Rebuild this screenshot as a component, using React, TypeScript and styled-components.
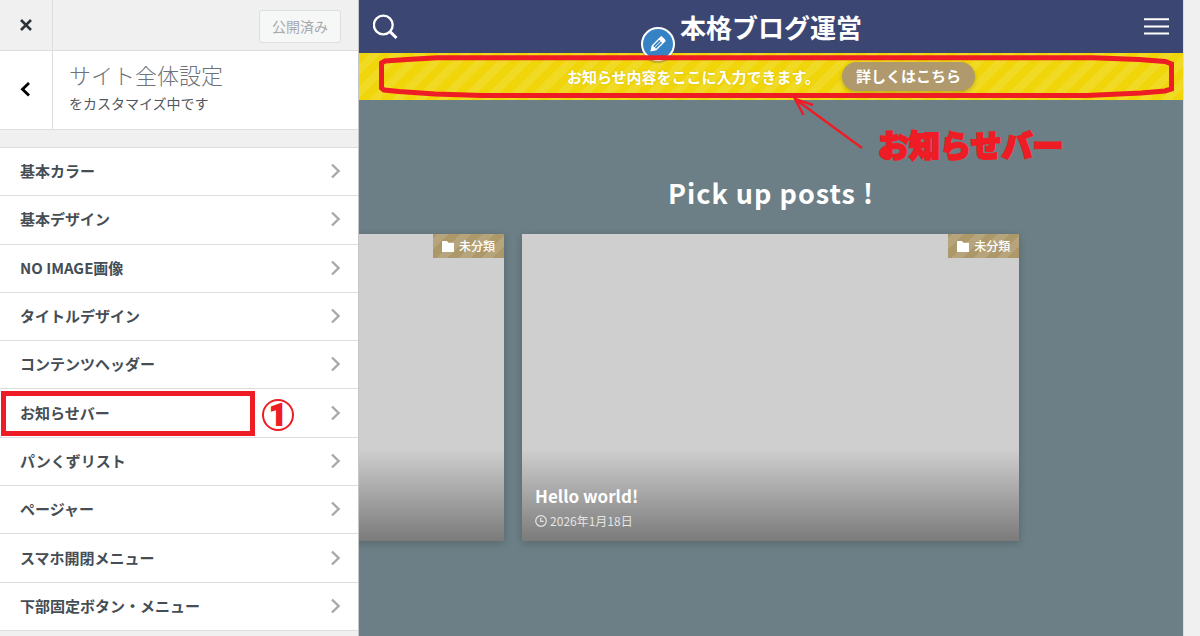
import React from 'react';
import styled, { createGlobalStyle, css } from 'styled-components';

const RED = '#ee1c24';
const LINE = '#dcdedf';

const GlobalStyle = createGlobalStyle`
  *, *::before, *::after { box-sizing: border-box; }
  html, body { margin: 0; height: 100%; }
  #root { height: 100%; }
  body {
    font-family: "Noto Sans CJK JP", sans-serif;
    background: #f0f0f0;
    color: #3c434a;
  }
  button, a { font-family: inherit; }
  h1, h2, h3, p, ul { margin: 0; padding: 0; }
`;

const Shell = styled.div`
  display: grid;
  grid-template-columns: 359px minmax(0, 1fr) 17px;
  height: 100%;
  min-height: 636px;
  overflow: hidden;
`;

const Sidebar = styled.aside`
  display: flex;
  flex-direction: column;
  min-height: 0;
  background: #f0f0f0;
  border-right: 1px solid #c3c7ca;
`;

const SidebarTop = styled.header`
  display: flex;
  justify-content: space-between;
  align-items: stretch;
  height: 51px;
  border-bottom: 1px solid ${LINE};
`;

const SquareButton = styled.button`
  display: flex;
  align-items: center;
  justify-content: center;
  flex: 0 0 53px;
  padding: 0;
  border: 0;
  border-right: 1px solid ${LINE};
  background: transparent;
  color: #2c3338;
`;

const PublishButton = styled.button`
  align-self: center;
  width: 82px;
  height: 33px;
  margin: 2px 17px 0 0;
  padding: 0;
  border: 1px solid #dcdedf;
  border-radius: 3px;
  background: #f6f7f7;
  color: #a7aaad;
  font-size: 14px;
  line-height: 20px;
`;

const SectionHead = styled.div`
  display: flex;
  height: 79px;
  background: #fff;
  border-bottom: 1px solid ${LINE};
`;

const SectionText = styled.div`
  padding: 7px 16px;
`;

const SectionTitle = styled.h2`
  font-size: 22px;
  line-height: 32px;
  font-weight: 200;
  color: #6c737a;
`;

const SectionNote = styled.p`
  font-size: 14px;
  line-height: 26px;
  color: #50575e;
`;

const MenuList = styled.ul`
  display: grid;
  grid-auto-rows: 1fr;
  flex: 0 0 484px;
  margin-top: 17px;
  border-top: 1px solid ${LINE};
  list-style: none;
`;

const MenuItem = styled.li`
  position: relative;
  display: flex;
  background: #fff;
  border-bottom: 1px solid ${LINE};
`;

const MenuButton = styled.button`
  display: flex;
  flex: 1;
  align-items: center;
  justify-content: space-between;
  padding: 0 16px 1px 20px;
  border: 0;
  background: transparent;
  color: #454d55;
  font-size: 15px;
  line-height: 24px;
  font-weight: 600;
  text-align: left;
`;

const Highlight = styled.span`
  position: absolute;
  top: 2px;
  left: 1px;
  width: 254px;
  height: 45px;
  border: 5px solid ${RED};
  pointer-events: none;
`;

const NumberMark = styled.span`
  position: absolute;
  top: 10px;
  left: 262px;
  display: flex;
  align-items: center;
  justify-content: center;
  width: 32px;
  height: 32px;
  border: 2px solid ${RED};
  border-radius: 50%;
  color: ${RED};
  font-family: Roboto, sans-serif;
  font-size: 30px;
  line-height: 30px;
  font-weight: 700;
  -webkit-text-stroke: 2px ${RED};
  pointer-events: none;
`;

const Preview = styled.main`
  position: relative;
  min-width: 0;
  overflow: hidden;
  background: #6c7f86;
  color: #fff;
`;

const SiteHeader = styled.header`
  display: grid;
  grid-template-columns: 1fr auto 1fr;
  align-items: center;
  height: 53px;
  padding: 0 14px;
  background: #3c4673;
`;

const IconButton = styled.button<{ $end?: boolean }>`
  display: flex;
  justify-self: ${(p) => (p.$end ? 'end' : 'start')};
  padding: 0;
  border: 0;
  background: transparent;
  color: #fff;
`;

const SiteName = styled.h1`
  position: relative;
  font-size: 26px;
  line-height: 36px;
  font-weight: 700;
`;

const EditBadge = styled.button`
  position: absolute;
  top: 18px;
  left: -39px;
  z-index: 1;
  display: flex;
  align-items: center;
  justify-content: center;
  width: 34px;
  height: 34px;
  padding: 0;
  border: 2px solid #fff;
  border-radius: 50%;
  background: #3582c4;
  color: #fff;
  box-shadow: 0 2px 1px rgba(60, 67, 74, 0.3);
`;

const stripes = (base: string, light: string) => css`
  background: repeating-linear-gradient(
    -45deg,
    ${base} 0 8px,
    ${light} 8px 16px
  );
`;

const NoticeBar = styled.div`
  position: relative;
  display: flex;
  align-items: center;
  justify-content: center;
  gap: 22px;
  height: 47px;
  font-size: 15px;
  line-height: 24px;
  font-weight: 700;
  ${stripes('#f0d50a', '#f0da24')}
`;

const NoticeText = styled.span`
  text-shadow: 0 0 2px rgba(120, 100, 0, 0.2);
`;

const NoticeLink = styled.a`
  padding: 2px 14px 3px;
  border-radius: 20px;
  background: #b0996c;
  color: #fff;
  text-decoration: none;
  box-shadow: 0 2px 4px rgba(0, 0, 0, 0.2);
`;

const NoticeOutline = styled.svg`
  position: absolute;
  inset: 0;
  z-index: 2;
  width: 100%;
  height: 100%;
  pointer-events: none;
`;

const Callout = styled.div`
  position: absolute;
  top: 96px;
  left: 434px;
  display: flex;
  align-items: flex-start;
  gap: 15px;
  color: ${RED};
  pointer-events: none;
`;

const CalloutText = styled.span`
  padding-top: 26px;
  font-size: 31px;
  line-height: 44px;
  font-weight: 900;
  white-space: nowrap;
  -webkit-text-stroke: 2px ${RED};
`;

const Pickup = styled.section`
  padding-top: 72px;
`;

const PickupTitle = styled.h2`
  font-size: 27px;
  line-height: 42px;
  font-weight: 600;
  letter-spacing: 1px;
  text-align: center;
`;

const Slider = styled.div`
  display: flex;
  justify-content: flex-end;
  gap: 18px;
  padding: 20px calc(20% - 1px) 30px 0;
`;

const Card = styled.article`
  position: relative;
  display: flex;
  flex-direction: column;
  justify-content: flex-end;
  flex: 0 0 calc(75% + 2px);
  aspect-ratio: 1.618;
  padding: 8px 13px;
  background: linear-gradient(#cfcfcf 0 70%, #7b7b7b 100%);
  box-shadow: 0 2px 8px rgba(0, 0, 0, 0.2);
`;

const Category = styled.a`
  position: absolute;
  top: 0;
  right: 0;
  display: flex;
  align-items: center;
  gap: 5px;
  height: 24px;
  padding: 0 9px;
  color: #fff;
  font-size: 12px;
  line-height: 18px;
  font-weight: 500;
  text-decoration: none;
  ${stripes('#ad9869', '#b6a47c')}
`;

const CardTitle = styled.h3`
  font-size: 17px;
  line-height: 26px;
  font-weight: 700;
`;

const CardDate = styled.time`
  display: flex;
  align-items: center;
  gap: 3px;
  color: #e4e4e4;
  font-size: 12px;
  line-height: 24px;
`;

const Gutter = styled.div`
  background: #f0f0f0;
  border-left: 1px solid #dcdedf;
`;

const menu = [
  '基本カラー',
  '基本デザイン',
  'NO IMAGE画像',
  'タイトルデザイン',
  'コンテンツヘッダー',
  'お知らせバー',
  'パンくずリスト',
  'ページャー',
  'スマホ開閉メニュー',
  '下部固定ボタン・メニュー',
];

const Chevron = () => (
  <svg width="12" height="16" viewBox="0 0 12 16" fill="none" stroke="#a7aaad" strokeWidth="2.4" aria-hidden="true">
    <path d="M2 1.5 8.600 8 2 14.5" />
  </svg>
);

const CategoryTag = () => (
  <Category href="#category">
    <svg width="12" height="11" viewBox="0 0 12 11" fill="currentColor" aria-hidden="true">
      <path d="M.6 0H5l1.4 1.8h5q.6 0 .6.6v8q0 .6-.6.6H.6Q0 11 0 10.400V.6Q0 0 .6 0Z" />
    </svg>
    未分類
  </Category>
);

export default function App() {
  return (
    <>
      <GlobalStyle />
      <Shell>
        <Sidebar>
          <SidebarTop>
            <SquareButton aria-label="閉じる">
              <svg width="12" height="12" viewBox="0 0 12 12" stroke="currentColor" strokeWidth="2.6" aria-hidden="true">
                <path d="M1 1 11 11M11 1 1 11" />
              </svg>
            </SquareButton>
            <PublishButton disabled>公開済み</PublishButton>
          </SidebarTop>
          <SectionHead>
            <SquareButton aria-label="戻る">
              <svg width="12" height="16" viewBox="0 0 12 16" fill="none" stroke="#000" strokeWidth="2.8" aria-hidden="true">
                <path d="M9 1 2.500 7.200 9 13.500" />
              </svg>
            </SquareButton>
            <SectionText>
              <SectionTitle>サイト全体設定</SectionTitle>
              <SectionNote>をカスタマイズ中です</SectionNote>
            </SectionText>
          </SectionHead>
          <MenuList>
            {menu.map((label) => (
              <MenuItem key={label}>
                <MenuButton>
                  {label}
                  <Chevron />
                </MenuButton>
                {label === 'お知らせバー' && (
                  <>
                    <Highlight />
                    <NumberMark>1</NumberMark>
                  </>
                )}
              </MenuItem>
            ))}
          </MenuList>
        </Sidebar>

        <Preview>
          <SiteHeader>
            <IconButton aria-label="検索">
              <svg width="26" height="26" viewBox="0 0 26 26" fill="none" stroke="currentColor" strokeWidth="2.3" aria-hidden="true">
                <circle cx="10.300" cy="11" r="9.400" />
                <path d="M17 17.600 23.500 24" strokeWidth="3" />
              </svg>
            </IconButton>
            <SiteName>
              本格ブログ運営
              <EditBadge aria-label="編集">
                <svg width="22" height="22" viewBox="0 0 20 20" fill="currentColor" aria-hidden="true">
                  <path d="m13.890 3.390 2.710 2.720c.46.46.42 1.240.03 1.640l-8.010 8.020-5.560 1.160 1.160-5.580s7.600-7.630 7.990-8.030c.39-.39 1.220-.39 1.680.07zm-2.730 2.790-5.590 5.610 1.110 1.110 5.540-5.650zm-2.970 8.230 5.580-5.600-1.070-1.080-5.590 5.600z" />
                </svg>
              </EditBadge>
            </SiteName>
            <IconButton $end aria-label="メニュー">
              <svg width="25" height="18" viewBox="0 0 25 18" stroke="currentColor" strokeWidth="2" aria-hidden="true">
                <path d="M0 1.200H25M0 8.400H25M0 15.600H25" />
              </svg>
            </IconButton>
          </SiteHeader>
          <NoticeBar>
            <NoticeText>お知らせ内容をここに入力できます。</NoticeText>
            <NoticeLink href="#notice">詳しくはこちら</NoticeLink>
            <NoticeOutline viewBox="0 0 824 47" preserveAspectRatio="none" fill="none" stroke={RED} strokeWidth="5" aria-hidden="true">
              <path d="M22.500 10 26 8 48 6.500 78 4.800H734L780 6.500 806 8.500 812.500 11V36L806 38 782 40 728 42.500H123L76 41 40 38.500 25 37 22.500 35Z" />
            </NoticeOutline>
          </NoticeBar>
          <Callout>
            <svg width="70" height="54" viewBox="0 0 70 54" fill="none" stroke="currentColor" strokeWidth="2.4" aria-hidden="true">
              <path d="M69 52 2 3M10.500 19 2 3 20 9" />
            </svg>
            <CalloutText>お知らせバー</CalloutText>
          </Callout>
          <Pickup>
            <PickupTitle>Pick up posts !</PickupTitle>
            <Slider>
              <Card>
                <CategoryTag />
              </Card>
              <Card>
                <CategoryTag />
                <CardTitle>Hello world!</CardTitle>
                <CardDate>
                  <svg width="12" height="12" viewBox="0 0 12 12" fill="none" stroke="currentColor" strokeWidth="1.2" aria-hidden="true">
                    <circle cx="6" cy="6" r="5.300" />
                    <path d="M5.800 2.800V6.400H8.600" />
                  </svg>
                  2026年1月18日
                </CardDate>
              </Card>
            </Slider>
          </Pickup>
        </Preview>
        <Gutter />
      </Shell>
    </>
  );
}
